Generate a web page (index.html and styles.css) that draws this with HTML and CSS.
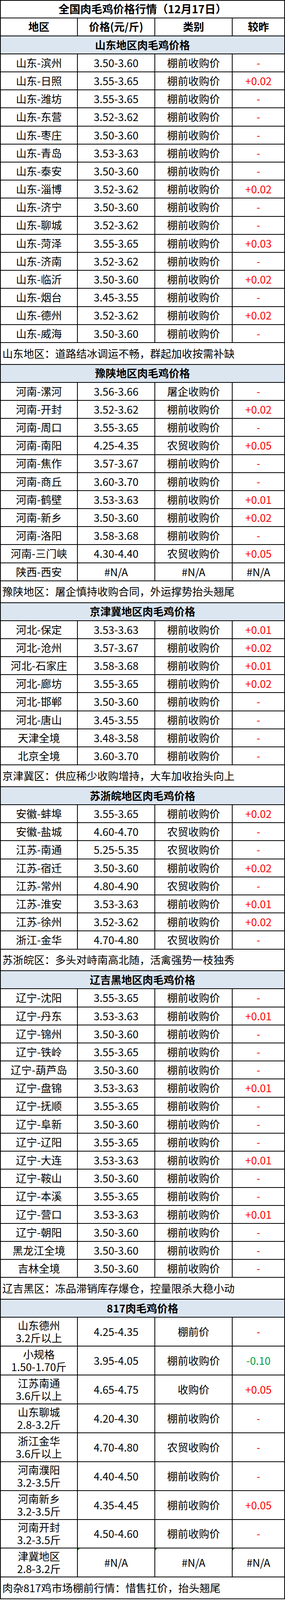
FILE: index.html
```html
<!DOCTYPE html>
<html lang="zh-CN">
<head>
<meta charset="utf-8">
<title>全国肉毛鸡价格行情</title>
<link rel="stylesheet" href="styles.css">
</head>
<body>
<div class="sheet">
  <div class="row full title"><div class="cell">全国肉毛鸡价格行情（12月17日）</div></div>
  <div class="row head">
    <div class="cell">地区</div><div class="cell">价格(元/斤)</div><div class="cell">类别</div><div class="cell">较昨</div>
  </div>

  <div class="row full section"><div class="cell">山东地区肉毛鸡价格</div></div>
  <div class="row"><div class="cell">山东-滨州</div><div class="cell">3.50-3.60</div><div class="cell">棚前收购价</div><div class="cell up">-</div></div>
  <div class="row"><div class="cell">山东-日照</div><div class="cell">3.55-3.65</div><div class="cell">棚前收购价</div><div class="cell up">+0.02</div></div>
  <div class="row"><div class="cell">山东-潍坊</div><div class="cell">3.55-3.65</div><div class="cell">棚前收购价</div><div class="cell up">-</div></div>
  <div class="row"><div class="cell">山东-东营</div><div class="cell">3.52-3.62</div><div class="cell">棚前收购价</div><div class="cell up">-</div></div>
  <div class="row"><div class="cell">山东-枣庄</div><div class="cell">3.50-3.60</div><div class="cell">棚前收购价</div><div class="cell up">-</div></div>
  <div class="row"><div class="cell">山东-青岛</div><div class="cell">3.53-3.63</div><div class="cell">棚前收购价</div><div class="cell up">-</div></div>
  <div class="row"><div class="cell">山东-泰安</div><div class="cell">3.50-3.60</div><div class="cell">棚前收购价</div><div class="cell up">-</div></div>
  <div class="row"><div class="cell">山东-淄博</div><div class="cell">3.52-3.62</div><div class="cell">棚前收购价</div><div class="cell up">+0.02</div></div>
  <div class="row"><div class="cell">山东-济宁</div><div class="cell">3.50-3.60</div><div class="cell">棚前收购价</div><div class="cell up">-</div></div>
  <div class="row"><div class="cell">山东-聊城</div><div class="cell">3.52-3.62</div><div class="cell">棚前收购价</div><div class="cell up">-</div></div>
  <div class="row"><div class="cell">山东-菏泽</div><div class="cell">3.55-3.65</div><div class="cell">棚前收购价</div><div class="cell up">+0.03</div></div>
  <div class="row"><div class="cell">山东-济南</div><div class="cell">3.52-3.62</div><div class="cell">棚前收购价</div><div class="cell up">-</div></div>
  <div class="row"><div class="cell">山东-临沂</div><div class="cell">3.50-3.60</div><div class="cell">棚前收购价</div><div class="cell up">+0.02</div></div>
  <div class="row"><div class="cell">山东-烟台</div><div class="cell">3.45-3.55</div><div class="cell">棚前收购价</div><div class="cell up">-</div></div>
  <div class="row"><div class="cell">山东-德州</div><div class="cell">3.52-3.62</div><div class="cell">棚前收购价</div><div class="cell up">+0.02</div></div>
  <div class="row"><div class="cell">山东-威海</div><div class="cell">3.50-3.60</div><div class="cell">棚前收购价</div><div class="cell up">-</div></div>
  <div class="row full note"><div class="cell">山东地区：道路结冰调运不畅，群起加收按需补缺</div></div>

  <div class="row full section"><div class="cell">豫陕地区肉毛鸡价格</div></div>
  <div class="row"><div class="cell">河南-漯河</div><div class="cell">3.56-3.66</div><div class="cell">屠企收购价</div><div class="cell up">-</div></div>
  <div class="row"><div class="cell">河南-开封</div><div class="cell">3.52-3.62</div><div class="cell">棚前收购价</div><div class="cell up">+0.02</div></div>
  <div class="row"><div class="cell">河南-周口</div><div class="cell">3.55-3.65</div><div class="cell">棚前收购价</div><div class="cell up">-</div></div>
  <div class="row"><div class="cell">河南-南阳</div><div class="cell">4.25-4.35</div><div class="cell">农贸收购价</div><div class="cell up">+0.05</div></div>
  <div class="row"><div class="cell">河南-焦作</div><div class="cell">3.57-3.67</div><div class="cell">棚前收购价</div><div class="cell up">-</div></div>
  <div class="row"><div class="cell">河南-商丘</div><div class="cell">3.60-3.70</div><div class="cell">棚前收购价</div><div class="cell up">-</div></div>
  <div class="row"><div class="cell">河南-鹤壁</div><div class="cell">3.53-3.63</div><div class="cell">棚前收购价</div><div class="cell up">+0.01</div></div>
  <div class="row"><div class="cell">河南-新乡</div><div class="cell">3.50-3.60</div><div class="cell">棚前收购价</div><div class="cell up">+0.02</div></div>
  <div class="row"><div class="cell">河南-洛阳</div><div class="cell">3.58-3.68</div><div class="cell">棚前收购价</div><div class="cell up">-</div></div>
  <div class="row"><div class="cell">河南-三门峡</div><div class="cell">4.30-4.40</div><div class="cell">农贸收购价</div><div class="cell up">+0.05</div></div>
  <div class="row"><div class="cell">陕西-西安</div><div class="cell">#N/A</div><div class="cell">#N/A</div><div class="cell">#N/A</div></div>
  <div class="row full note"><div class="cell">豫陕地区：屠企慎持收购合同，外运撑势抬头翘尾</div></div>

  <div class="row full section"><div class="cell">京津冀地区肉毛鸡价格</div></div>
  <div class="row"><div class="cell">河北-保定</div><div class="cell">3.53-3.63</div><div class="cell">棚前收购价</div><div class="cell up">+0.01</div></div>
  <div class="row"><div class="cell">河北-沧州</div><div class="cell">3.57-3.67</div><div class="cell">棚前收购价</div><div class="cell up">+0.02</div></div>
  <div class="row"><div class="cell">河北-石家庄</div><div class="cell">3.58-3.68</div><div class="cell">棚前收购价</div><div class="cell up">+0.01</div></div>
  <div class="row"><div class="cell">河北-廊坊</div><div class="cell">3.55-3.65</div><div class="cell">棚前收购价</div><div class="cell up">+0.02</div></div>
  <div class="row"><div class="cell">河北-邯郸</div><div class="cell">3.50-3.60</div><div class="cell">棚前收购价</div><div class="cell up">-</div></div>
  <div class="row"><div class="cell">河北-唐山</div><div class="cell">3.45-3.55</div><div class="cell">棚前收购价</div><div class="cell up">-</div></div>
  <div class="row"><div class="cell">天津全境</div><div class="cell">3.48-3.58</div><div class="cell">棚前收购价</div><div class="cell up">-</div></div>
  <div class="row"><div class="cell">北京全境</div><div class="cell">3.60-3.70</div><div class="cell">棚前收购价</div><div class="cell up">-</div></div>
  <div class="row full note"><div class="cell">京津冀区：供应稀少收购增持，大车加收抬头向上</div></div>

  <div class="row full section"><div class="cell">苏浙皖地区肉毛鸡价格</div></div>
  <div class="row"><div class="cell">安徽-蚌埠</div><div class="cell">3.55-3.65</div><div class="cell">棚前收购价</div><div class="cell up">+0.02</div></div>
  <div class="row"><div class="cell">安徽-盐城</div><div class="cell">4.60-4.70</div><div class="cell">农贸收购价</div><div class="cell up">-</div></div>
  <div class="row"><div class="cell">江苏-南通</div><div class="cell">5.25-5.35</div><div class="cell">农贸收购价</div><div class="cell up">-</div></div>
  <div class="row"><div class="cell">江苏-宿迁</div><div class="cell">3.50-3.60</div><div class="cell">棚前收购价</div><div class="cell up">+0.02</div></div>
  <div class="row"><div class="cell">江苏-常州</div><div class="cell">4.80-4.90</div><div class="cell">农贸收购价</div><div class="cell up">-</div></div>
  <div class="row"><div class="cell">江苏-淮安</div><div class="cell">3.53-3.63</div><div class="cell">棚前收购价</div><div class="cell up">+0.01</div></div>
  <div class="row"><div class="cell">江苏-徐州</div><div class="cell">3.52-3.62</div><div class="cell">棚前收购价</div><div class="cell up">+0.02</div></div>
  <div class="row"><div class="cell">浙江-金华</div><div class="cell">4.70-4.80</div><div class="cell">农贸收购价</div><div class="cell up">-</div></div>
  <div class="row full note"><div class="cell">苏浙皖区：多头对峙南高北随，活禽强势一枝独秀</div></div>

  <div class="row full section"><div class="cell">辽吉黑地区肉毛鸡价格</div></div>
  <div class="row"><div class="cell">辽宁-沈阳</div><div class="cell">3.55-3.65</div><div class="cell">棚前收购价</div><div class="cell up">-</div></div>
  <div class="row"><div class="cell">辽宁-丹东</div><div class="cell">3.53-3.63</div><div class="cell">棚前收购价</div><div class="cell up">+0.01</div></div>
  <div class="row"><div class="cell">辽宁-锦州</div><div class="cell">3.50-3.60</div><div class="cell">棚前收购价</div><div class="cell up">-</div></div>
  <div class="row"><div class="cell">辽宁-铁岭</div><div class="cell">3.55-3.65</div><div class="cell">棚前收购价</div><div class="cell up">-</div></div>
  <div class="row"><div class="cell">辽宁-葫芦岛</div><div class="cell">3.50-3.60</div><div class="cell">棚前收购价</div><div class="cell up">-</div></div>
  <div class="row"><div class="cell">辽宁-盘锦</div><div class="cell">3.53-3.63</div><div class="cell">棚前收购价</div><div class="cell up">+0.01</div></div>
  <div class="row"><div class="cell">辽宁-抚顺</div><div class="cell">3.55-3.65</div><div class="cell">棚前收购价</div><div class="cell up">-</div></div>
  <div class="row"><div class="cell">辽宁-阜新</div><div class="cell">3.50-3.60</div><div class="cell">棚前收购价</div><div class="cell up">-</div></div>
  <div class="row"><div class="cell">辽宁-辽阳</div><div class="cell">3.55-3.65</div><div class="cell">棚前收购价</div><div class="cell up">-</div></div>
  <div class="row"><div class="cell">辽宁-大连</div><div class="cell">3.53-3.63</div><div class="cell">棚前收购价</div><div class="cell up">+0.01</div></div>
  <div class="row"><div class="cell">辽宁-鞍山</div><div class="cell">3.50-3.60</div><div class="cell">棚前收购价</div><div class="cell up">-</div></div>
  <div class="row"><div class="cell">辽宁-本溪</div><div class="cell">3.55-3.65</div><div class="cell">棚前收购价</div><div class="cell up">-</div></div>
  <div class="row"><div class="cell">辽宁-营口</div><div class="cell">3.53-3.63</div><div class="cell">棚前收购价</div><div class="cell up">+0.01</div></div>
  <div class="row"><div class="cell">辽宁-朝阳</div><div class="cell">3.50-3.60</div><div class="cell">棚前收购价</div><div class="cell up">-</div></div>
  <div class="row"><div class="cell">黑龙江全境</div><div class="cell">3.50-3.60</div><div class="cell">棚前收购价</div><div class="cell up">-</div></div>
  <div class="row"><div class="cell">吉林全境</div><div class="cell">3.50-3.60</div><div class="cell">棚前收购价</div><div class="cell up">-</div></div>
  <div class="row full note"><div class="cell">辽吉黑区：冻品滞销库存爆仓，控量限杀大稳小动</div></div>

  <div class="row full section"><div class="cell">817肉毛鸡价格</div></div>
  <div class="row tall"><div class="cell">山东德州<br>3.2斤以上</div><div class="cell">4.25-4.35</div><div class="cell">棚前价</div><div class="cell up">-</div></div>
  <div class="row tall"><div class="cell">小规格<br>1.50-1.70斤</div><div class="cell">3.95-4.05</div><div class="cell">棚前收购价</div><div class="cell down">-0.10</div></div>
  <div class="row tall"><div class="cell">江苏南通<br>3.6斤以上</div><div class="cell">4.65-4.75</div><div class="cell">收购价</div><div class="cell up">+0.05</div></div>
  <div class="row tall"><div class="cell">山东聊城<br>2.8-3.2斤</div><div class="cell">4.20-4.30</div><div class="cell">棚前收购价</div><div class="cell up">-</div></div>
  <div class="row tall"><div class="cell">浙江金华<br>3.6斤以上</div><div class="cell">4.70-4.80</div><div class="cell">农贸收购价</div><div class="cell up">-</div></div>
  <div class="row tall"><div class="cell">河南濮阳<br>3.2-3.5斤</div><div class="cell">4.40-4.50</div><div class="cell">棚前收购价</div><div class="cell up">-</div></div>
  <div class="row tall"><div class="cell">河南新乡<br>3.2-3.5斤</div><div class="cell">4.35-4.45</div><div class="cell">棚前收购价</div><div class="cell up">+0.05</div></div>
  <div class="row tall"><div class="cell">河南开封<br>3.2-3.5斤</div><div class="cell">4.50-4.60</div><div class="cell">棚前收购价</div><div class="cell up">-</div></div>
  <div class="row tall"><div class="cell">津冀地区<br>2.8-3.2斤</div><div class="cell flag">#N/A</div><div class="cell flag">#N/A</div><div class="cell flag">#N/A</div></div>
  <div class="row full note"><div class="cell">肉杂817鸡市场棚前行情：惜售扛价，抬头翘尾</div></div>
</div>
</body>
</html>
```

FILE: styles.css
```css
/* The capture window is capped at 4096px high, so the vertical rhythm of the
   4701px sheet is scaled to fit while column widths stay at full size. */
html, body {
  margin: 0;
  padding: 0;
  background: #ffffff;
}

body {
  font-family: "Noto Sans CJK SC", "Noto Sans", sans-serif;
  font-size: 27px;
  line-height: 1.2;
  color: #000000;
}

.sheet {
  width: 729px;
  box-sizing: border-box;
  padding: 2px;
  background: #000000;
  display: grid;
  grid-template-columns: 100%;
  row-gap: 2px;
}

.row {
  display: grid;
  grid-template-columns: 195px 196px 196px 132px;
  grid-template-rows: 100%;
  column-gap: 2px;
  height: 44.2px;
  overflow: hidden;
}

.row.full {
  grid-template-columns: 725px;
}

.cell {
  background: #ffffff;
  display: flex;
  align-items: center;
  justify-content: center;
  text-align: center;
  white-space: nowrap;
  position: relative;
  min-height: 0;
  min-width: 0;
}

.title {
  height: 42.5px;
}

.title .cell {
  font-weight: 700;
  font-size: 28px;
}

.head .cell {
  font-weight: 700;
}

.section .cell {
  background: #dce6f1;
  font-weight: 700;
}

.note {
  height: 53.7px;
}

.note .cell {
  justify-content: flex-start;
  text-align: left;
  padding-left: 4px;
}

.tall {
  height: 71.9px;
}

.tall .cell {
  line-height: 32px;
}

.up {
  color: #ff0000;
}

.down {
  color: #00a040;
}

.flag::before {
  content: "";
  position: absolute;
  left: 0;
  top: 0;
  width: 0;
  height: 0;
  border-top: 5px solid #1a8a1a;
  border-right: 5px solid transparent;
}
```
